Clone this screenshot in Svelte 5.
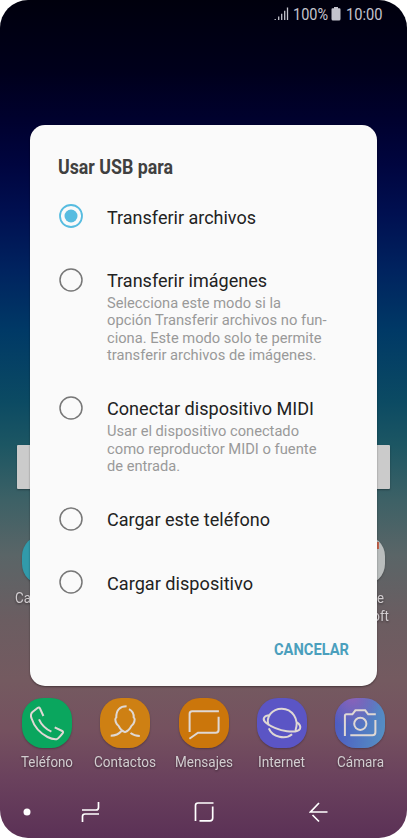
<script>
  const options = [
    { title: 'Transferir archivos', w: 149, lines: [], on: true },
    { title: 'Transferir imágenes', w: 160, lines: [['Selecciona este modo si la', 174], ['opción Transferir archivos no fun-', 219.5], ['ciona. Este modo solo te permite', 214.5], ['transferir archivos de imágenes.', 209.5]] },
    { title: 'Conectar dispositivo MIDI', w: 207, lines: [['Usar el dispositivo conectado', 192], ['como reproductor MIDI o fuente', 209.5], ['de entrada.', 73]] },
    { title: 'Cargar este teléfono', w: 163, lines: [] },
    { title: 'Cargar dispositivo', w: 146, lines: [] }
  ];
  const apps = [
    { name: 'Teléfono', w: 52, kind: 'phone' },
    { name: 'Contactos', w: 62, kind: 'contacts' },
    { name: 'Mensajes', w: 58, kind: 'messages' },
    { name: 'Internet', w: 47, kind: 'internet' },
    { name: 'Cámara', w: 47, kind: 'camera' }
  ];
</script>

{#snippet fitted(text, width, height, baseline, cls)}
  <svg class={cls} {width} {height} overflow="visible"><text x="0" y={baseline} textLength={width} lengthAdjust="spacingAndGlyphs">{text}</text></svg>
{/snippet}

<div class="phone">
  <header>
    <svg class="signal" width="15" height="14" viewBox="0 0 15 14"><path d="M1.2 13v-1M4.7 13V9.5M7.7 13V6.8M10.7 13V3.7M13.5 13V.5" /></svg>
    {@render fitted('100%', 35, 20, 16.5, 'status')}
    <svg class="battery" width="10" height="14" viewBox="0 0 10 14"><path d="M3 0h4v1.3h1.5Q9.5 1.3 9.5 2.5V12Q9.5 13.5 8 13.5H2Q.5 13.5.5 12V2.5Q.5 1.3 1.5 1.3H3Z" /></svg>
    {@render fitted('10:00', 36.5, 20, 16.5, 'status')}
  </header>

  <div class="search"></div>
  <div class="row back">
    <div class="app"><div class="tile teal"></div>{@render fitted('Calendario', 64, 17, 14, 'name')}</div>
    <div class="app"><div class="tile pale"><i></i></div>{@render fitted('Apps de', 48, 17, 14, 'name')}{@render fitted('Microsoft', 58, 18, 14, 'name')}</div>
  </div>

  <main>
    <h1>{@render fitted('Usar USB para', 115, 26, 19, 'heading')}</h1>
    <ul>
      {#each options as option}
        <li>
          <svg class="radio" class:on={option.on} width="24" height="24" viewBox="0 0 24 24"><circle class="ring" cx="12" cy="12" r="11" />{#if option.on}<circle class="core" cx="12" cy="12" r="6.5" />{/if}</svg>
          <div class="copy">
            {@render fitted(option.title, option.w, 27, 19.5, 'title')}
            {#each option.lines as [line, w]}
              {@render fitted(line, w, 17.4, 14, 'note')}
            {/each}
          </div>
        </li>
      {/each}
    </ul>
    <button>{@render fitted('CANCELAR', 75, 24, 18.5, 'action')}</button>
  </main>

  <div class="row dock">
    {#each apps as app}
      <div class="app">
        <div class="tile {app.kind}">
          <svg width="50" height="50" viewBox="0 0 50 50">
            {#if app.kind === 'phone'}
              <path d="M21.400 18L18 10.500q-.8-1.600-2.200-.7L10.500 14q-2.600 2.500-.9 6.500C12 28 18 35 25.500 39q5 2.700 9.200 2.200 1.800-.4 6-6 1-1.400-.5-2.200l-7.500-3.700M17 21.300c2 4.500 6 9.200 12.400 12.400" />
            {:else if app.kind === 'contacts'}
              <path d="M26.600 8.300C20 8.300 16 12 16.300 19.500c-1.500 1-1 3.500.2 6 .8 1.700 1.800 1.700 2.300 2.700 1.500 3 3.500 5 6.200 5.900 2.700-.9 4.700-2.900 6.200-5.900.5-1 1.500-1 2.300-2.700 1.200-2.500 1.700-5 .2-6 .2-3.500-1.200-6.500-4.700-8.300M22 32.500q-4.500 5.200-11.300 5.200M30.500 35q3.500 2.800 9.300 3" />
            {:else if app.kind === 'messages'}
              <path d="M10.600 34V15.800q0-2.500 2.500-2.500h26.800M39.600 18.800v13q0 2.900-2.900 2.900H19l-8.600 6" />
            {:else if app.kind === 'internet'}
              <path d="M11.700 27.500C8.500 19 15 10.700 24.800 10.700 35 10.700 42.500 21 38.500 32.500M12 17.200c-6 .8-7 4.800-2.500 8C14 28.500 22 32 30 33.200c6 .8 11.500.5 13-2.500 1-2.300-.7-4.700-3.500-6.500M11.800 30.300c4 9.200 16.500 11.500 23.300 5.900" />
            {:else}
              <path d="M9.900 38V17.800q0-1.500 1.500-1.500h6l3-4h9.800l3 4h7.600M40.400 22v12.200q0 3-3 3H15.300" /><circle cx="25.300" cy="25.800" r="6.100" />
            {/if}
          </svg>
        </div>
        {@render fitted(app.name, app.w, 18, 14, 'name')}
      </div>
    {/each}
  </div>

  <nav>
    <svg width="8" height="22" viewBox="0 0 8 22"><circle cx="4" cy="11" r="3.500" fill="#fff" stroke="none" /></svg>
    <svg width="20" height="22" viewBox="0 0 20 22"><path d="M1 9h14q2.500 0 2.500-2.500V1M18 13H4q-2.500 0-2.500 2.500V21" /></svg>
    <svg width="20" height="22" viewBox="0 0 20 22"><path d="M1.500 20V4.500q0-2.500 2.500-2.500h15.500M18.700 5.500V17q0 2.800-2.800 2.800H5.500" /></svg>
    <svg width="20" height="22" viewBox="0 0 20 22"><path d="M18.500 11H1.500L10 2M3.500 14l6.500 6.500" /></svg>
  </nav>
</div>

<style>
  :global(body) { margin: 0; background: #fff; }
  .phone {
    position: relative; box-sizing: border-box; width: 407px; height: 838px; overflow: hidden; border-radius: 28px;
    display: flex; flex-direction: column; font-family: Roboto, sans-serif;
    background: linear-gradient(#00000d 0, #00001b 70px, #00012e 120px, #00053f 165px, #001051 215px, #00235f 270px, #003966 330px, #0b4a63 400px, #1c5663 445px, #3d6166 500px, #5a6567 555px, #6b5d61 620px, #745a60 680px, #75515f 730px, #6a415d 780px, #5b3156 838px);
  }
  svg { display: block; flex: none; }
  header { height: 28px; box-sizing: border-box; padding: 3px 25px 0 0; display: flex; justify-content: flex-end; align-items: flex-start; }
  .signal { margin: 4px 4.500px 0 0; stroke: #c4c4cd; stroke-width: 1.3; }
  .battery { margin: 3.500px 4.500px 0 3px; fill: #c4c4cd; }
  .status { font-size: 17px; fill: #c4c4cd; }
  .search { height: 44px; margin: 417px 17px 0; background: #cbcbcb; border-radius: 1px; box-shadow: 0 1px 2px #0005; }
  .row { display: flex; justify-content: space-between; }
  .app { width: 78px; display: flex; flex-direction: column; align-items: center; }
  .tile { position: relative; width: 50px; height: 50px; border-radius: 21px; box-shadow: 0 1px 2px #0004; }
  .tile svg { fill: none; stroke: #dfd8d4; stroke-width: 2; }
  .name { font-size: 15.5px; fill: #d2cdd0; filter: drop-shadow(0 1px 1px #0007); }
  .back { margin: 46px 8px 0; height: 163px; }
  .back .name { margin-top: 4px; }
  .back .name + .name { margin-top: 1px; }
  .teal { background: #319aaa; }
  .pale { background: #b9bdbd; }
  .pale i { position: absolute; right: 6px; top: 7px; width: 14px; height: 7px; background: #c3624b; }
  .dock { padding: 0 8px; height: 103px; }
  .dock .name { margin-top: 5px; }
  .phone .tile.phone { display: block; background: #0aa65e; }
  .contacts { background: #ce8013; }
  .messages { background: #cb760b; }
  .internet { background: #5b55c5; }
  .camera { background: radial-gradient(circle at 35% 0, #8a62b9, transparent 50%), linear-gradient(100deg, #4d57c1, #5592c4); }
  main {
    position: absolute; left: 30px; top: 124.500px; width: 346.500px; height: 561px; box-sizing: border-box; padding: 30px 27.500px 0;
    border-radius: 15px; background: #fafafa; box-shadow: 0 1px 2px #0006;
  }
  h1 { margin: 0; }
  .heading { font-size: 20px; font-weight: 700; fill: #404040; }
  ul { list-style: none; padding: 0; margin: 23px 0 0; display: flex; flex-direction: column; gap: 31.600px; }
  li { display: flex; align-items: flex-start; gap: 24.500px; padding-left: 1px; min-height: 32px; }
  .radio { margin-top: .5px; }
  .ring { fill: none; stroke: #777; stroke-width: 1.500; }
  .on .ring { stroke: #57bce0; stroke-width: 1.800; }
  .core { fill: #57bce0; }
  .title { font-size: 18px; fill: #222; }
  .note { font-size: 14.500px; fill: #999; }
  button { display: block; border: 0; padding: 0; margin: 34px 0 0 auto; background: none; font-family: inherit; }
  .action { font-size: 17px; font-weight: 700; fill: #4b9fbd; }
  nav { display: flex; margin: 0 0 0 22.500px; }
  nav svg { fill: none; stroke: #fff; stroke-width: 1.700; }
  nav svg:nth-child(2) { margin-left: 50.500px; }
  nav svg:nth-child(3) { margin-left: 93px; }
  nav svg:nth-child(4) { margin-left: 95px; }
</style>
